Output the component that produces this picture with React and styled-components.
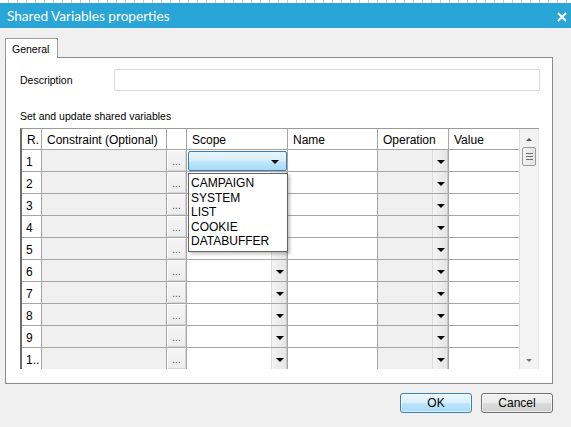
import React from 'react';
import styled, { createGlobalStyle } from 'styled-components';

const GlobalStyle = createGlobalStyle`
  html, body {
    margin: 0;
    padding: 0;
    background: #f0f0f0;
    font-family: "Liberation Sans", Arial, sans-serif;
  }
`;

const Window = styled.div`
  width: 571px;
  height: 427px;
  display: flex;
  flex-direction: column;
  background: #f0f0f0;
  overflow: hidden;
`;

const TopStrip = styled.div`
  height: 3px;
  background: repeating-linear-gradient(90deg, #ffffff 0 8px, #c8c8c8 8px 9px);
`;

const TitleBar = styled.div`
  height: 25px;
  background: #29a5d8;
  display: flex;
  align-items: center;
  justify-content: space-between;
  padding: 0 4px 0 7px;
  color: #fff;
  font-family: Lato, "Noto Sans", sans-serif;
  font-size: 13.6px;
`;

const CloseBtn = styled.div`
  width: 10px;
  height: 10px;
  display: flex;
  margin-top: 2px;
`;

const Body = styled.div`
  flex: 1;
  display: flex;
  flex-direction: column;
  padding: 9px 18px 0 5px;
`;

const Tabs = styled.div`
  display: flex;
  height: 20px;
`;

const Tab = styled.div`
  width: 53px;
  border: 1px solid #9a9a9a;
  border-bottom: none;
  background: #fff;
  font-size: 10.5px;
  padding: 4px 0 0 6px;
  box-sizing: border-box;
  position: relative;
  top: 1px;
  color: #000;
`;

const Panel = styled.div`
  height: 327px;
  box-sizing: border-box;
  border: 1px solid #8c8c8c;
  background: #fff;
  padding: 11px 12px 0 14px;
  display: flex;
  flex-direction: column;
  width: 548px;
`;

const FieldRow = styled.div`
  display: flex;
  align-items: center;
  height: 22px;
`;

const Label = styled.div`
  width: 94px;
  font-size: 10.5px;
  color: #000;
`;

const TextInput = styled.div`
  flex: 1;
  height: 22px;
  box-sizing: border-box;
  border: 1px solid #dadada;
  border-radius: 2px;
  background: #fff;
`;

const Caption = styled.div`
  font-size: 10.5px;
  margin: 19px 0 6px;
  height: 12px;
`;

const GridWrap = styled.div`
  position: relative;
  display: flex;
  width: 519px;
  height: 241px;
  border-left: 2px solid #6e6e6e;
  border-top: 1px solid #9a9a9a;
  box-sizing: border-box;
`;

const Grid = styled.div`
  display: grid;
  grid-template-columns: 20px 125px 20px 101px 90px 71px 71px;
  grid-auto-rows: 22px;
  grid-template-rows: 21px;
  width: 498px;
  overflow: hidden;
`;

const HeadCell = styled.div`
  background: #fff;
  border-right: 1px solid #a6a6a6;
  border-bottom: 1px solid #a6a6a6;
  font-size: 12px;
  padding: 4px 0 0 5px;
  box-sizing: border-box;
  white-space: nowrap;
  overflow: hidden;
  color: #000;
`;

const Cell = styled.div`
  position: relative;
  box-sizing: border-box;
  border-right: 1px solid #a6a6a6;
  border-bottom: 1px solid #a6a6a6;
  background: ${p => (p.$gray ? '#f0f0f0' : '#fff')};
  font-size: 12px;
  padding: 5px 0 0 4px;
  color: #000;
  overflow: hidden;
  white-space: nowrap;
`;

const EllipsisCell = styled(Cell)`
  padding: 0;
  display: flex;
  align-items: flex-end;
  justify-content: center;
  background: linear-gradient(#f6f6f6, #ececec);
  box-shadow: inset 1px 1px 0 #ffffff, inset -1px -1px 0 #d6d6d6;
  font-size: 10px;
  color: #555;
  line-height: 12px;
  padding-bottom: 3px;
`;

const DropBtn = styled.div`
  position: absolute;
  right: 0;
  top: 0;
  bottom: 0;
  width: 16px;
  background: linear-gradient(90deg, #f4f4f4, #e4e4e4);
  border-left: 1px solid #dcdcdc;
  box-shadow: inset -1px 0 0 #c8c8c8;
  display: flex;
  align-items: center;
  justify-content: center;
  padding-top: 2px;
  box-sizing: border-box;
`;

const Arrow = styled.div`
  width: 0;
  height: 0;
  border-left: 4px solid transparent;
  border-right: 4px solid transparent;
  border-top: 4px solid #000;
`;

const SelectedCombo = styled.div`
  position: absolute;
  left: 1px;
  top: 1px;
  right: 0;
  bottom: 0;
  border: 1px solid #3c7fb1;
  border-radius: 2px;
  background: linear-gradient(#eaf6fd 0%, #d9f0fc 45%, #bee6fd 55%, #a7d9f5 100%);
  display: flex;
  align-items: center;
  justify-content: flex-end;
  padding: 2px 7px 0 0;
  box-sizing: border-box;
`;

const ScrollBar = styled.div`
  width: 20px;
  display: flex;
  flex-direction: column;
  align-items: center;
  background: #f3f3f3;
  border-left: 1px solid #dcdcdc;
  border-right: 1px solid #e4e4e4;
  box-sizing: border-box;
`;

const ScrollArrow = styled.div`
  width: 0;
  height: 0;
  border-left: 3px solid transparent;
  border-right: 3px solid transparent;
  ${p => (p.$down ? 'border-top: 3px solid #777;' : 'border-bottom: 3px solid #555;')}
  margin: ${p => (p.$down ? 'auto 0 7px' : '9px 0 6px')};
`;

const Thumb = styled.div`
  width: 14px;
  height: 19px;
  box-sizing: border-box;
  border: 1px solid #9a9a9a;
  border-radius: 2px;
  background: linear-gradient(90deg, #f4f4f4, #e2e2e2);
  display: flex;
  flex-direction: column;
  align-items: center;
  justify-content: center;
  gap: 2px;
`;

const Grip = styled.div`
  width: 7px;
  height: 1px;
  background: #6f6f6f;
`;

const DropList = styled.div`
  position: absolute;
  left: 166px;
  top: 44px;
  width: 100px;
  height: 79px;
  box-sizing: border-box;
  background: #fff;
  border: 1px solid #646464;
  box-shadow: 2px 2px 3px rgba(0, 0, 0, 0.25);
  padding: 2px 0 0 2px;
  z-index: 2;
`;

const DropItem = styled.div`
  font-size: 12px;
  height: 14.6px;
  line-height: 14.6px;
  color: #000;
`;

const Footer = styled.div`
  display: flex;
  justify-content: flex-end;
  gap: 9px;
  margin-top: 9px;
`;

const Button = styled.div`
  width: 72px;
  height: 20px;
  box-sizing: border-box;
  border-radius: 3px;
  border: 1px solid ${p => (p.$primary ? '#3c7fb1' : '#707070')};
  background: ${p =>
    p.$primary
      ? 'linear-gradient(#eaf6fd 0%, #d9f0fc 50%, #bee6fd 50%, #a7d9f5 100%)'
      : 'linear-gradient(#f2f2f2 0%, #ebebeb 50%, #dddddd 50%, #cfcfcf 100%)'};
  box-shadow: inset 0 0 0 1px rgba(255, 255, 255, 0.6);
  display: flex;
  align-items: center;
  justify-content: center;
  font-size: 12px;
  color: #000;
`;

const headers = ['R.', 'Constraint (Optional)', '', 'Scope', 'Name', 'Operation', 'Value'];
const rows = ['1', '2', '3', '4', '5', '6', '7', '8', '9', '1..'];
const scopes = ['CAMPAIGN', 'SYSTEM', 'LIST', 'COOKIE', 'DATABUFFER'];

export default function App() {
  return (
    <>
      <GlobalStyle />
      <Window>
        <TopStrip />
        <TitleBar>
          <span>Shared Variables properties</span>
          <CloseBtn>
            <svg width="10" height="10" viewBox="0 0 10 10">
              <path d="M1 1 L9 9 M9 1 L1 9" stroke="#fff" strokeWidth="2" />
            </svg>
          </CloseBtn>
        </TitleBar>
        <Body>
          <Tabs>
            <Tab>General</Tab>
          </Tabs>
          <Panel>
            <FieldRow>
              <Label>Description</Label>
              <TextInput />
            </FieldRow>
            <Caption>Set and update shared variables</Caption>
            <GridWrap>
              <Grid>
                {headers.map((h, i) => (
                  <HeadCell key={i}>{h}</HeadCell>
                ))}
                {rows.map((r, i) => (
                  <React.Fragment key={r}>
                    <Cell>{r}</Cell>
                    <Cell $gray />
                    <EllipsisCell>...</EllipsisCell>
                    <Cell>
                      {i === 0 ? (
                        <SelectedCombo>
                          <Arrow />
                        </SelectedCombo>
                      ) : (
                        <DropBtn>
                          <Arrow />
                        </DropBtn>
                      )}
                    </Cell>
                    <Cell />
                    <Cell $gray>
                      <DropBtn>
                        <Arrow />
                      </DropBtn>
                    </Cell>
                    <Cell />
                  </React.Fragment>
                ))}
              </Grid>
              <ScrollBar>
                <ScrollArrow />
                <Thumb>
                  <Grip />
                  <Grip />
                  <Grip />
                </Thumb>
                <ScrollArrow $down />
              </ScrollBar>
              <DropList>
                {scopes.map(s => (
                  <DropItem key={s}>{s}</DropItem>
                ))}
              </DropList>
            </GridWrap>
          </Panel>
          <Footer>
            <Button $primary>OK</Button>
            <Button>Cancel</Button>
          </Footer>
        </Body>
      </Window>
    </>
  );
}
